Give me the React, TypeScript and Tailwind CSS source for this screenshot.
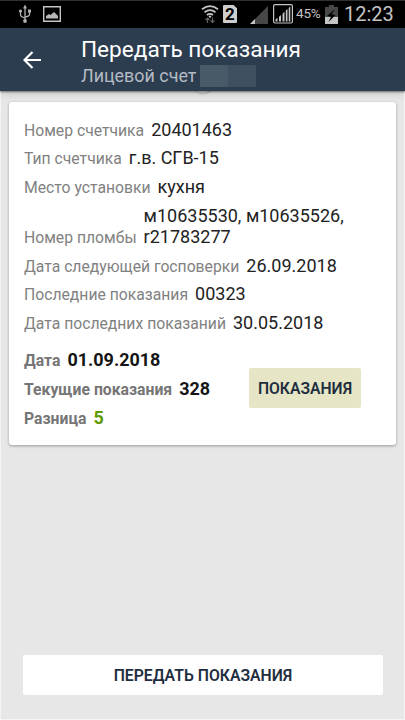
import type { ReactNode } from "react";

interface Reading {
  label: string;
  value: ReactNode;
}

const details: Reading[] = [
  { label: "Номер счетчика", value: "20401463" },
  { label: "Тип счетчика", value: "г.в. СГВ-15" },
  { label: "Место установки", value: "кухня" },
  {
    label: "Номер пломбы",
    value: (
      <>
        м10635530, м10635526,
        <br />
        r21783277
      </>
    ),
  },
  { label: "Дата следующей госповерки", value: "26.09.2018" },
  { label: "Последние показания", value: "00323" },
  { label: "Дата последних показаний", value: "30.05.2018" },
];

const current = [
  { label: "Дата", value: "01.09.2018", color: "text-[#151515]" },
  { label: "Текущие показания", value: "328", color: "text-[#151515]" },
  { label: "Разница", value: "5", color: "text-[#5f9a00]" },
];

const StatusBar = () => (
  <div className="flex h-7 shrink-0 items-center border-t border-[#303030] bg-black pb-px text-[#c4c4c4]">
    {/* usb */}
    <svg width="14" height="20" viewBox="0 0 14 20" className="ml-[18px]" fill="none" stroke="#b0b0b0" strokeWidth="1.3">
      <path d="M7 4v13M2.5 7.5v3.2q0 2 4.5 3.2M11.5 7v3.2q0 2-4.5 2.8" />
      <path d="M7 .5 9 4.5H5z" fill="#b0b0b0" stroke="none" />
      <circle cx="2.5" cy="7" r="1.6" fill="#b0b0b0" stroke="none" />
      <path d="M10 5.5h3v3h-3z" fill="#b0b0b0" stroke="none" />
      <circle cx="7" cy="17" r="1.9" fill="#b0b0b0" stroke="none" />
    </svg>
    {/* gallery */}
    <svg width="18" height="16" viewBox="0 0 18 16" className="ml-[11px]" fill="none">
      <path d="M.7.7h16.6v14.6H.7z" stroke="#c4c4c4" strokeWidth="1.4" />
      <path d="M3 12.5V10l3-2 1.5 1L11 6l4 4v2.5z" fill="#b8b8b8" />
    </svg>
    {/* wifi */}
    <svg width="18" height="20" viewBox="0 0 18 20" className="ml-[140px]" fill="none" stroke="#c4c4c4" strokeWidth="1.8">
      <path d="M1 5.2q8-6 16 0M3.5 8.2q5.5-4.2 11 0M6 11q3-2.3 6 0" />
      <path d="m9 11.2 1.5 1.4L9 14.2l-1.5-1.6z" fill="#c4c4c4" stroke="none" />
      <path d="M6.5 19v-5M4.5 16l2-2 2 2M11.5 13.5v5M9.5 16.5l2 2 2-2" stroke="#626262" strokeWidth="1.2" />
    </svg>
    <div className="ml-1 flex h-[18px] w-[14px] items-center justify-center rounded-[1px] bg-[#cecece] text-[17px] font-bold leading-none text-black [clip-path:polygon(0_0,75%_0,100%_18%,100%_100%,0_100%)]">
      2
    </div>
    <svg width="18" height="18" viewBox="0 0 18 18" className="ml-[13px] mt-[2px]">
      <path d="M18 0v18H0z" fill="#474747" />
      <path d="M5 13v5H0z" fill="#c4c4c4" />
    </svg>
    <svg width="20" height="20" viewBox="0 0 20 20" className="ml-[5px]">
      <rect x=".6" y=".6" width="18.8" height="18.4" rx="1.5" fill="none" stroke="#c4c4c4" strokeWidth="1.2" />
      <path d="M2.5 17.5v-2l2-1.8v3.8zM6 17.5v-4.8l2-1.7v6.5zM9.5 17.5V9.7l2-1.9v9.7zM12.8 17.5V6.6l1.7-1.7v12.6zM15.7 17.5V4l1.6-1.5v15z" fill="#c4c4c4" />
    </svg>
    <span className="ml-[3px] w-[26px] text-[13.5px] leading-none tracking-[-0.2px]">45%</span>
    {/* battery */}
    <svg width="13" height="19" viewBox="0 0 13 19" className="ml-[3px]">
      <path d="M0 2h4V0h5v2h4v17H0z" fill="#484848" />
      <path d="M0 12h13v7H0z" fill="#c4c4c4" />
      <path d="m10 4-8 7 4 .8L3.5 17l7-7-4-.8z" fill="#000" />
    </svg>
    <span className="ml-[6px] text-[20px] leading-none">12:23</span>
  </div>
);

const Header = () => (
  <header className="relative z-10 flex h-[63px] shrink-0 bg-[#2d3d50] shadow-[0_1px_2px_rgba(0,0,0,0.5),0_3px_8px_rgba(0,0,0,0.12)]">
    <button className="ml-[23px] mt-[23px] h-[18px] w-[18px]" aria-label="Назад">
      <svg width="18" height="18" viewBox="0 0 18 18" fill="none" stroke="#fff" strokeWidth="2.2">
        <path d="M18 9H1.5M9.5 1 1.5 9l8 8" />
      </svg>
    </button>
    <div className="ml-[40px] pt-[8px]">
      <h1 className="whitespace-nowrap text-[22.6px] leading-[27px] text-white">Передать показания</h1>
      <div className="flex items-start text-[17.9px] leading-[26px] text-[#b4bbc3]">
        <span className="whitespace-nowrap">Лицевой счет</span>
        <span className="ml-1 mt-[2px] flex h-[22px] w-14">
          <span className="w-1/2 bg-[#4a5968]" />
          <span className="w-1/2 bg-[#415061]" />
        </span>
      </div>
    </div>
  </header>
);

const App = () => {
  return (
    <div className="flex h-[720px] w-[405px] flex-col overflow-hidden bg-[#e7e7e7] font-[Roboto,sans-serif]">
      <StatusBar />
      <Header />

      <main className="relative flex flex-1 flex-col border-x border-b border-[#f5f5f5]">
        {/* progress spinner tucked under the header */}
        <div className="absolute -top-[22px] left-[190px] h-6 w-6 rounded-full bg-[#e7e7e7] shadow-[0_1px_2px_rgba(0,0,0,0.2)]" />

        <section className="ml-2 mt-[11px] h-[343px] w-[387px] rounded-[3px] bg-white pl-[15px] pt-[16.6px] shadow-[0_1px_3px_rgba(0,0,0,0.35)]">
          {details.map(({ label, value }) => (
            <div key={label} className="flex items-baseline-last pb-[6.75px] leading-[21px]">
              <span className="whitespace-nowrap text-[15.72px] text-[#818181]">{label}</span>
              <span className="ml-[7px] whitespace-nowrap text-[18px] text-[#222]">{value}</span>
            </div>
          ))}

          <div className="mt-[8.5px] flex">
            <div className="w-[225px]">
              {current.map(({ label, value, color }) => (
                <div key={label} className="flex items-baseline pb-[7px] font-bold leading-[21px]">
                  <span className="whitespace-nowrap text-[15.75px] text-[#757575]">{label}</span>
                  <span className={`ml-[7px] text-[18px] ${color}`}>{value}</span>
                </div>
              ))}
            </div>
            <button className="mt-[19px] h-10 w-28 rounded-[2px] bg-[#e6e6c6] pt-px text-[15.7px] font-semibold text-[#1f2e3f]">
              ПОКАЗАНИЯ
            </button>
          </div>
        </section>

        <button className="mb-[24px] ml-[22px] mt-auto h-10 w-[360px] rounded-[2px] bg-white pt-[2px] text-[15.75px] font-semibold text-[#1f2e3f]">
          ПЕРЕДАТЬ ПОКАЗАНИЯ
        </button>
      </main>
    </div>
  );
};

export default App;
